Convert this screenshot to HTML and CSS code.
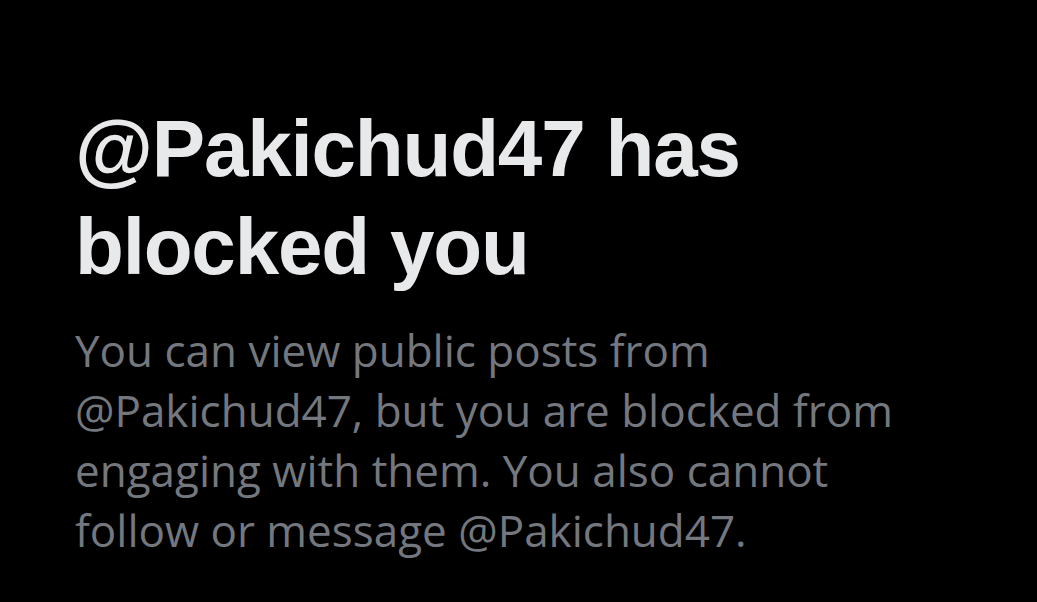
FILE: index.html
```html
<!DOCTYPE html>
<html lang="en">
<head>
    <meta charset="UTF-8">
    <meta name="viewport" content="width=device-width, initial-scale=1.0">
    <title>Blocked</title>
    <link rel="stylesheet" href="styles.css">
</head>
<body>
    <div class="blocked">
        <h1 class="blocked-title">@Pakichud47 has blocked you</h1>
        <p class="blocked-text">You can view public posts from @Pakichud47, but you are blocked from engaging with them. You also cannot follow or message @Pakichud47.</p>
    </div>
</body>
</html>
```

FILE: styles.css
```css
* {
    margin: 0;
    padding: 0;
}
body {
    background-color: #000;
    width: 100%;
    height: 100vh;
    overflow: hidden;
}
.blocked {
    padding: 100px 75px 0 75px;
    max-width: 840px;
}
.blocked-title {
    font-family: 'Liberation Sans', Arial, sans-serif;
    font-weight: bold;
    font-size: 80px;
    line-height: 98px;
    color: #e7e9ea;
    letter-spacing: -1.2px;
}
.blocked-text {
    margin-top: 24px;
    font-family: 'Open Sans', sans-serif;
    font-size: 44px;
    line-height: 60px;
    color: #74787e;
}
```
